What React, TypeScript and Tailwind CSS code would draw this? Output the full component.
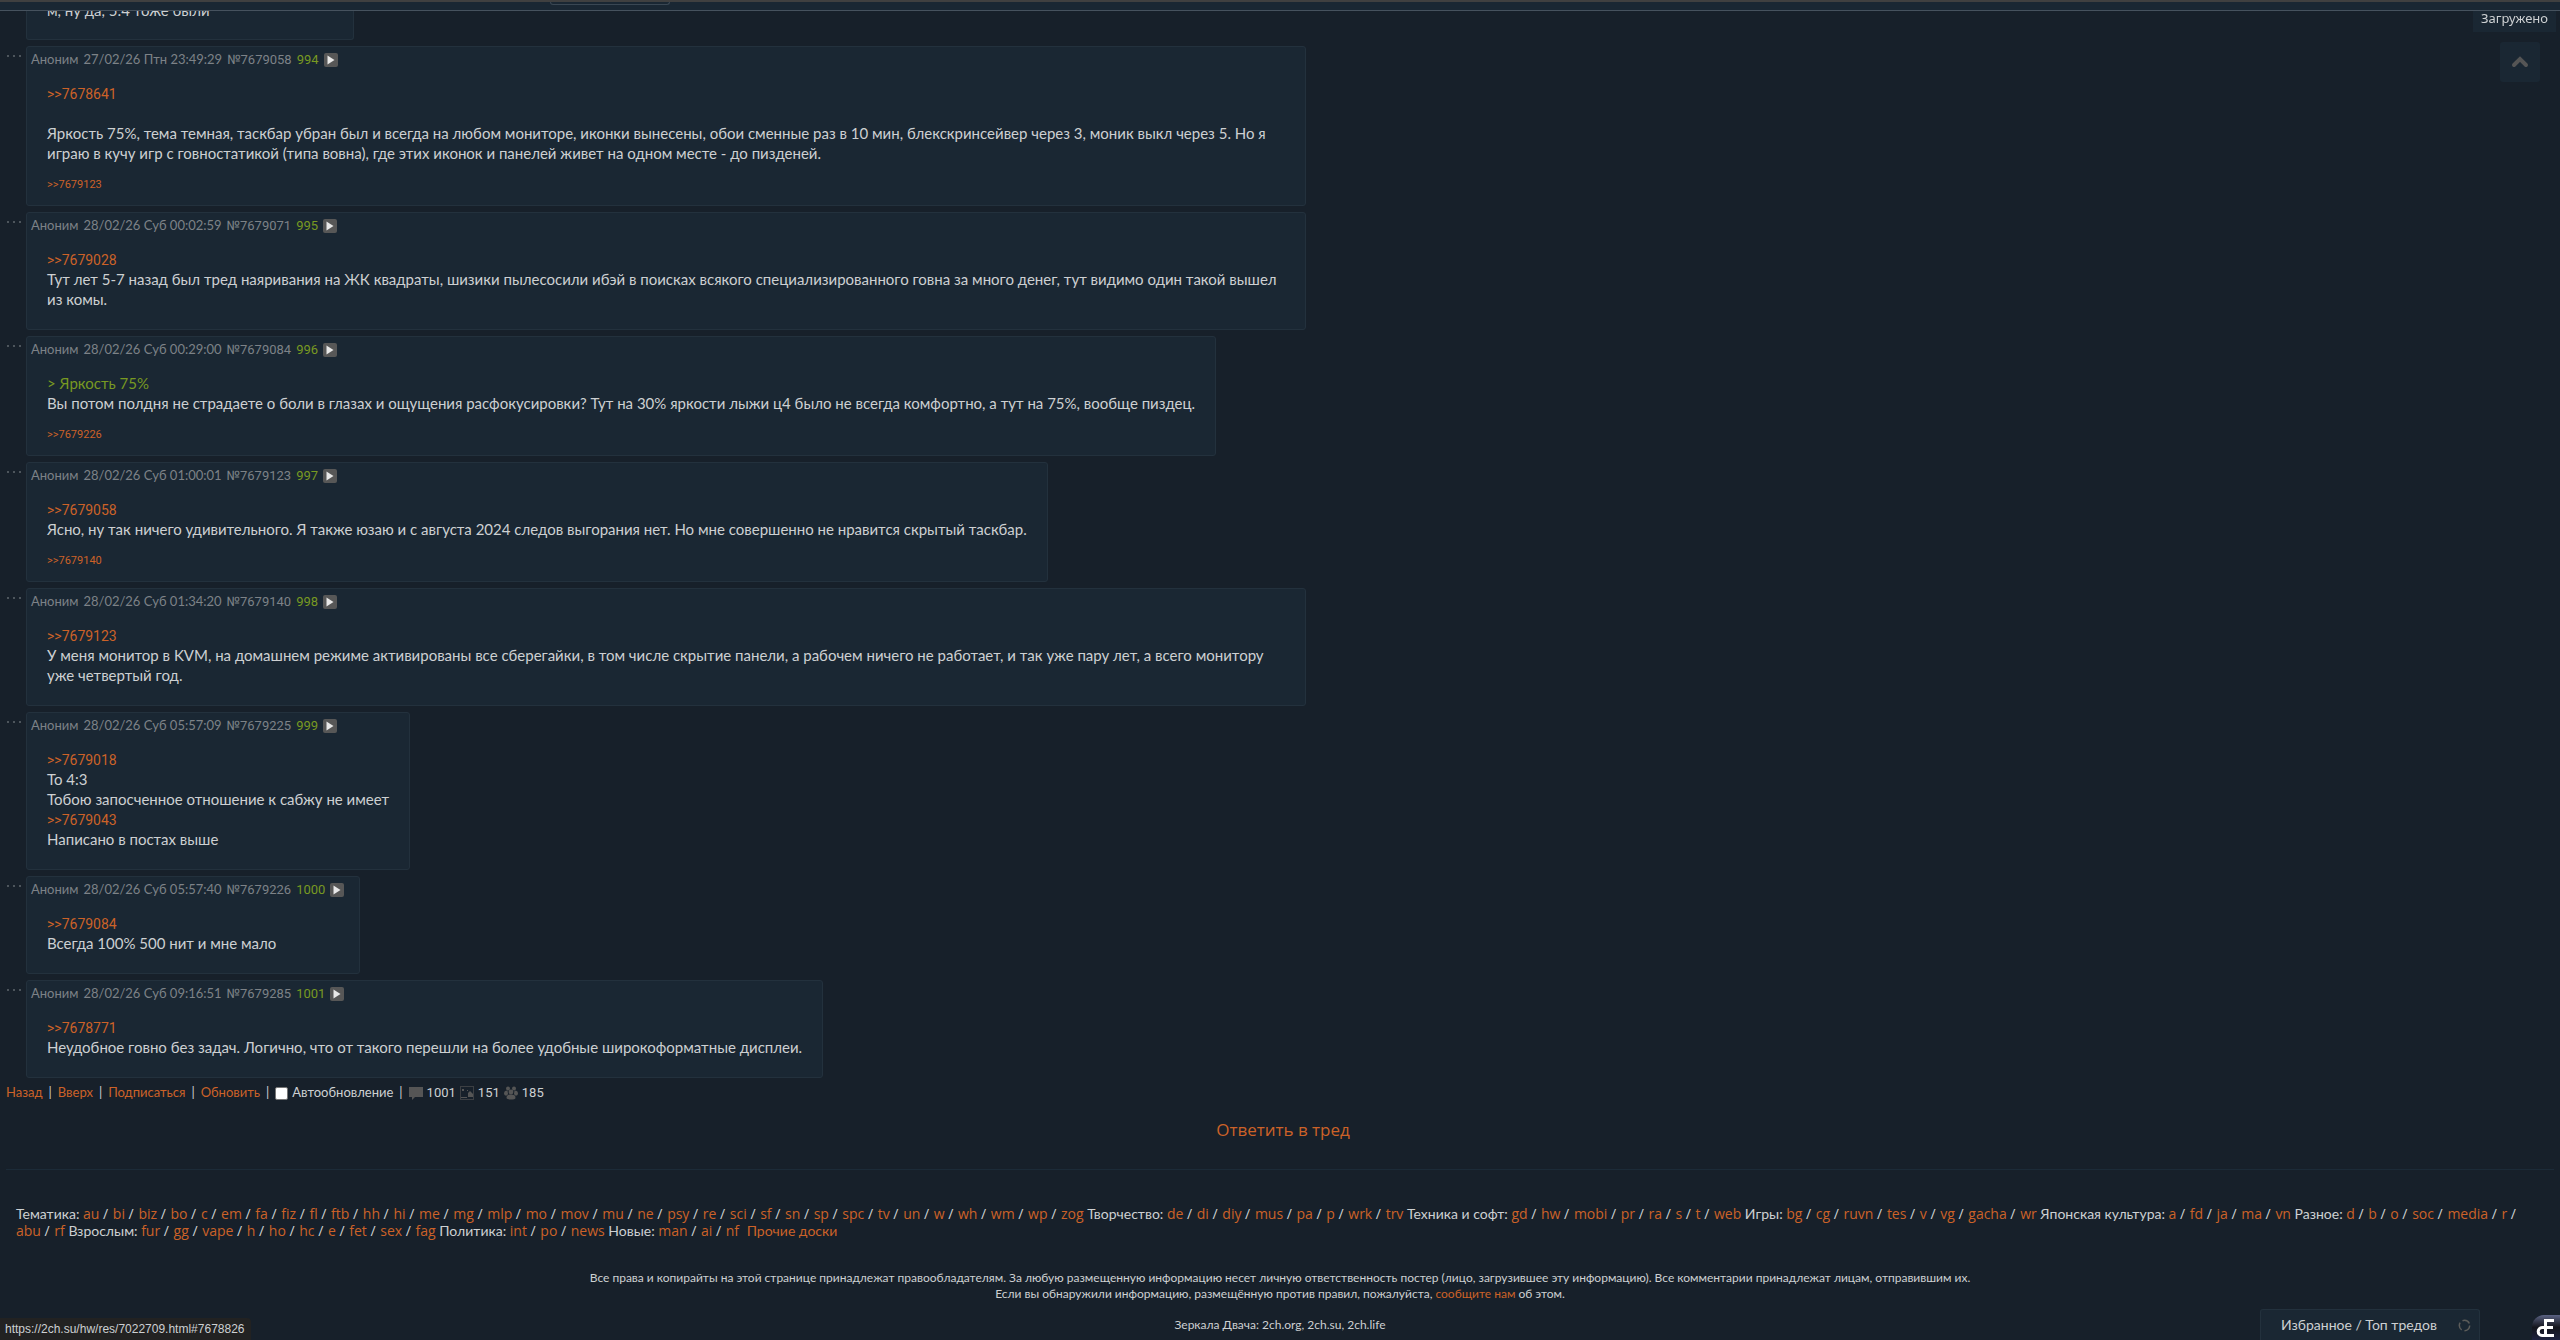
import React, { useState } from 'react';

interface Post {
  date: string;
  id: string;
  num: string;
  lines: string[];
  refs?: string[];
}

interface BoardGroup {
  title: string;
  boards: string[];
}

const posts: Post[] = [
  {
    date: '27/02/26 Птн 23:49:29',
    id: '7679058',
    num: '994',
    lines: [
      '>>7678641',
      '',
      'Яркость 75%, тема темная, таскбар убран был и всегда на любом мониторе, иконки вынесены, обои сменные раз в 10 мин, блекскринсейвер через 3, моник выкл через 5. Но я играю в кучу игр с говностатикой (типа вовна), где этих иконок и панелей живет на одном месте - до пизденей.',
    ],
    refs: ['>>7679123'],
  },
  {
    date: '28/02/26 Суб 00:02:59',
    id: '7679071',
    num: '995',
    lines: [
      '>>7679028',
      'Тут лет 5-7 назад был тред наяривания на ЖК квадраты, шизики пылесосили ибэй в поисках всякого специализированного говна за много денег, тут видимо один такой вышел из комы.',
    ],
  },
  {
    date: '28/02/26 Суб 00:29:00',
    id: '7679084',
    num: '996',
    lines: [
      '> Яркость 75%',
      'Вы потом полдня не страдаете о боли в глазах и ощущения расфокусировки? Тут на 30% яркости лыжи ц4 было не всегда комфортно, а тут на 75%, вообще пиздец.',
    ],
    refs: ['>>7679226'],
  },
  {
    date: '28/02/26 Суб 01:00:01',
    id: '7679123',
    num: '997',
    lines: [
      '>>7679058',
      'Ясно, ну так ничего удивительного. Я также юзаю и с августа 2024 следов выгорания нет. Но мне совершенно не нравится скрытый таскбар.',
    ],
    refs: ['>>7679140'],
  },
  {
    date: '28/02/26 Суб 01:34:20',
    id: '7679140',
    num: '998',
    lines: [
      '>>7679123',
      'У меня монитор в KVM, на домашнем режиме активированы все сберегайки, в том числе скрытие панели, а рабочем ничего не работает, и так уже пару лет, а всего монитору уже четвертый год.',
    ],
  },
  {
    date: '28/02/26 Суб 05:57:09',
    id: '7679225',
    num: '999',
    lines: [
      '>>7679018',
      'То 4:3',
      'Тобою запосченное отношение к сабжу не имеет',
      '>>7679043',
      'Написано в постах выше',
    ],
  },
  {
    date: '28/02/26 Суб 05:57:40',
    id: '7679226',
    num: '1000',
    lines: ['>>7679084', 'Всегда 100% 500 нит и мне мало'],
  },
  {
    date: '28/02/26 Суб 09:16:51',
    id: '7679285',
    num: '1001',
    lines: [
      '>>7678771',
      'Неудобное говно без задач. Логично, что от такого перешли на более удобные широкоформатные дисплеи.',
    ],
  },
];

const boardGroups: BoardGroup[] = [
  {
    title: 'Тематика',
    boards: 'au bi biz bo c em fa fiz fl ftb hh hi me mg mlp mo mov mu ne psy re sci sf sn sp spc tv un w wh wm wp zog'.split(' '),
  },
  { title: 'Творчество', boards: 'de di diy mus pa p wrk trv'.split(' ') },
  { title: 'Техника и софт', boards: 'gd hw mobi pr ra s t web'.split(' ') },
  { title: 'Игры', boards: 'bg cg ruvn tes v vg gacha wr'.split(' ') },
  { title: 'Японская культура', boards: 'a fd ja ma vn'.split(' ') },
  { title: 'Разное', boards: 'd b o soc media r abu rf'.split(' ') },
  { title: 'Взрослым', boards: 'fur gg vape h ho hc e fet sex fag'.split(' ') },
  { title: 'Политика', boards: 'int po news'.split(' ') },
  { title: 'Новые', boards: 'man ai nf'.split(' ') },
];

const linkClass = 'text-[#cc6228] hover:text-[#e68a57]';

const PostLine: React.FC<{ text: string }> = ({ text }) => {
  if (text.startsWith('>>')) {
    return (
      <p className="h-5">
        <a href={`#${text.slice(2)}`} className={`font-['Roboto',sans-serif] text-sm leading-5 ${linkClass}`}>
          {text}
        </a>
      </p>
    );
  }
  if (text.startsWith('>')) {
    return <p className="text-[#789922]">{text}</p>;
  }
  return <p className="min-h-5">{text}</p>;
};

const PostCard: React.FC<{ post: Post }> = ({ post }) => (
  <div className="flex items-start">
    <button type="button" aria-label="Меню поста" className="w-[26px] shrink-0 cursor-pointer pt-2 pl-[7px]">
      <svg width="14" height="4" viewBox="0 0 14 4" fill="#4d555c">
        <rect x="0" y="1" width="2" height="2" />
        <rect x="6" y="1" width="2" height="2" />
        <rect x="12" y="1" width="2" height="2" />
      </svg>
    </button>
    <article
      id={post.id}
      className="max-w-[50vw] rounded-[3px] border border-[#23313d] bg-[#1a2733]"
    >
      <header className="flex h-[26px] items-center gap-[5px] pr-[15px] pl-1 text-[13px] whitespace-nowrap text-[#7d8287]">
        <span>Аноним</span>
        <time>{post.date}</time>
        <a href={`#${post.id}`} className="font-['Roboto',sans-serif]">№{post.id}</a>
        <span className="font-['Roboto',sans-serif] text-[#789922]">{post.num}</span>
        <button
          type="button"
          aria-label="Ответить"
          className="flex size-3.5 cursor-pointer items-center justify-center rounded-xs bg-[#575757]"
        >
          <svg width="8" height="10" viewBox="0 0 8 10" fill="#e8e8e8">
            <path d="M0.5 0.5v9L7.5 5z" />
          </svg>
        </button>
      </header>
      <div className={`px-5 pt-2.5 text-[15px] leading-5 ${post.refs ? 'pb-3' : 'pb-5'}`}>
        {post.lines.map((line, idx) => (
          <PostLine key={idx} text={line} />
        ))}
        {post.refs && (
          <div className="mt-3.5 flex gap-1 font-['Roboto',sans-serif] text-[11px] leading-4">
            {post.refs.map((ref) => (
              <a key={ref} href={`#${ref.slice(2)}`} className={linkClass}>
                {ref}
              </a>
            ))}
          </div>
        )}
      </div>
    </article>
  </div>
);

const ThreadNav = () => {
  const [auto, setAuto] = useState(false);

  return (
    <nav className="flex h-[30px] items-center gap-1.5 pl-1.5 text-[13px]">
      <a href="#back" className={linkClass}>Назад</a>
      <span>|</span>
      <a href="#top" className={linkClass}>Вверх</a>
      <span>|</span>
      <a href="#subscribe" className={linkClass}>Подписаться</a>
      <span>|</span>
      <a href="#refresh" className={linkClass}>Обновить</a>
      <span>|</span>
      <label className="flex items-center gap-1">
        <input
          type="checkbox"
          checked={auto}
          onChange={(e) => setAuto(e.target.checked)}
          className="size-[13px] appearance-none rounded-xs border border-[#767676] bg-white checked:bg-[#cc6228]"
        />
        Автообновление
      </label>
      <span>|</span>
      <div className="flex items-center gap-1 font-['Roboto',sans-serif] text-[13px]">
        <svg width="14" height="14" viewBox="0 0 14 14" fill="#555">
          <path d="M0 1h14v10H6L3 14v-3H0z" />
        </svg>
        <span>1001</span>
        <svg width="14" height="14" viewBox="0 0 14 14" fill="#555">
          <path d="M0 0h14v14H0zM1 1v12h12V1z" fillRule="evenodd" opacity="0.6" />
          <rect x="2" y="3" width="2" height="2" />
          <rect x="7" y="4" width="1" height="1" />
          <path d="M10 5l3 3v3H8V7z" />
          <rect x="1" y="11" width="6" height="1" />
        </svg>
        <span>151</span>
        <svg width="14" height="14" viewBox="0 0 14 14" fill="#555">
          <circle cx="4" cy="2.500" r="2" />
          <circle cx="10" cy="2.500" r="2" />
          <circle cx="7" cy="6" r="2.400" />
          <path d="M0 8c0-2.500 1-3.500 3.500-3.500L4 8 3 9.500H1z" />
          <path d="M14 8c0-2.500-1-3.500-3.500-3.500L10 8l1 1.500h2z" />
          <path d="M2.500 12c0-2.800 1.500-3.600 4.500-3.600s4.500.8 4.500 3.600c0 2-9 2-9 0z" />
        </svg>
        <span>185</span>
      </div>
    </nav>
  );
};

export default function App() {
  return (
    <div className="min-h-screen overflow-hidden bg-[#17202a] font-['Lato','Noto_Sans',sans-serif] text-[#cdd0d2]">
      <div className="fixed inset-x-0 top-0 z-10 h-[11px] border-t-2 border-b border-t-[#404040] border-b-[#46525e] bg-[#1a2733] pl-[550px]">
        <div className="h-[3px] w-[120px] rounded-b-sm border border-t-0 border-[#3a4753]" />
      </div>

      <div className="fixed top-[11px] right-1 z-10 bg-[#1a2733] px-2 pb-1.5 font-['Noto_Sans',sans-serif] text-[13px] leading-[15px]">
        Загружено
      </div>
      <button
        type="button"
        aria-label="Наверх"
        className="fixed top-[42px] right-5 z-10 flex size-10 cursor-pointer items-center justify-center rounded-[3px] bg-[#1a2733]"
      >
        <svg width="18" height="12" viewBox="0 0 18 12" fill="none" stroke="#555" strokeWidth="4" strokeLinecap="round">
          <path d="M3 9l6-6 6 6" />
        </svg>
      </button>

      <main className="flex flex-col gap-1.5">
        <div className="flex pl-[26px]">
          <article className="min-w-[328px] rounded-b-[3px] border border-t-0 border-[#23313d] bg-[#1a2733] px-5 pb-[19px] text-[15px] leading-5">
            м, ну да, 5:4 тоже были
          </article>
        </div>
        {posts.map((post) => (
          <PostCard key={post.id} post={post} />
        ))}
      </main>

      <ThreadNav />

      <div className="flex justify-center pt-2.5 pl-1.5 font-['Open_Sans',sans-serif] text-[17px] font-medium">
        <button type="button" className={`cursor-pointer leading-6 ${linkClass}`}>Ответить в тред</button>
      </div>

      <hr className="mx-1.5 mt-[27px] border-[#1c2b38]" />

      <footer className="px-4 pt-[35px] text-sm leading-[17px]">
        <div>
          {boardGroups.map((group) => (
            <React.Fragment key={group.title}>
              {group.title}:{' '}
              <span className="font-['Open_Sans',sans-serif]">
                {group.boards.map((board, idx) => (
                  <React.Fragment key={board}>
                    {idx > 0 && <span className="mr-px"> / </span>}
                    <a href={`#${board}`} className={linkClass}>{board}</a>
                  </React.Fragment>
                ))}
              </span>{' '}
            </React.Fragment>
          ))}
          <a href="#boards" className={`ml-1 ${linkClass}`}>Прочие доски</a>
        </div>
        <div className="pt-[31px] text-center text-xs leading-4">
          <p>
            Все права и копирайты на этой странице принадлежат правообладателям. За любую размещенную информацию несет личную ответственность постер (лицо, загрузившее эту информацию). Все комментарии принадлежат лицам, отправившим их.
          </p>
          <p>
            Если вы обнаружили информацию, размещённую против правил, пожалуйста,{' '}
            <a href="#report" className={linkClass}>сообщите нам</a> об этом.
          </p>
          <p className="pt-[15px]">Зеркала Двача: 2ch.org, 2ch.su, 2ch.life</p>
        </div>
      </footer>

      <div className="fixed bottom-0 left-0 rounded-tr-sm bg-[#222222] pr-1.5 pl-[5px] font-['Liberation_Sans',sans-serif] text-xs leading-[22px]">
        https://2ch.su/hw/res/7022709.html#7678826
      </div>

      <div className="fixed right-20 bottom-0 flex h-[31px] w-[220px] items-center justify-between rounded-t-[3px] border border-b-0 border-[#23313d] bg-[#1a2733] pr-2 pl-5 text-sm">
        <button type="button" className="cursor-pointer">Избранное / Топ тредов</button>
        <svg width="13" height="13" viewBox="0 0 13 13" fill="none" stroke="#5c5c5a" strokeWidth="1.500">
          <circle cx="6.500" cy="6.500" r="5.200" strokeDasharray="8 2.900" />
        </svg>
      </div>

      <div className="fixed right-0 bottom-0 h-[25px] w-7 overflow-hidden rounded-tl-xl bg-linear-to-b from-[#5b6384] via-[#14151c] to-[#1e2340]">
        <svg width="28" height="25" viewBox="0 0 28 25" fill="none" stroke="#fff" strokeWidth="3">
          <path d="M13.500 4v18M12 5.500h10M13 12.500h8M12 20.500h10" />
          <path d="M13 12.500H10a3.800 4 0 0 0 0 8H13" />
        </svg>
      </div>
    </div>
  );
}
